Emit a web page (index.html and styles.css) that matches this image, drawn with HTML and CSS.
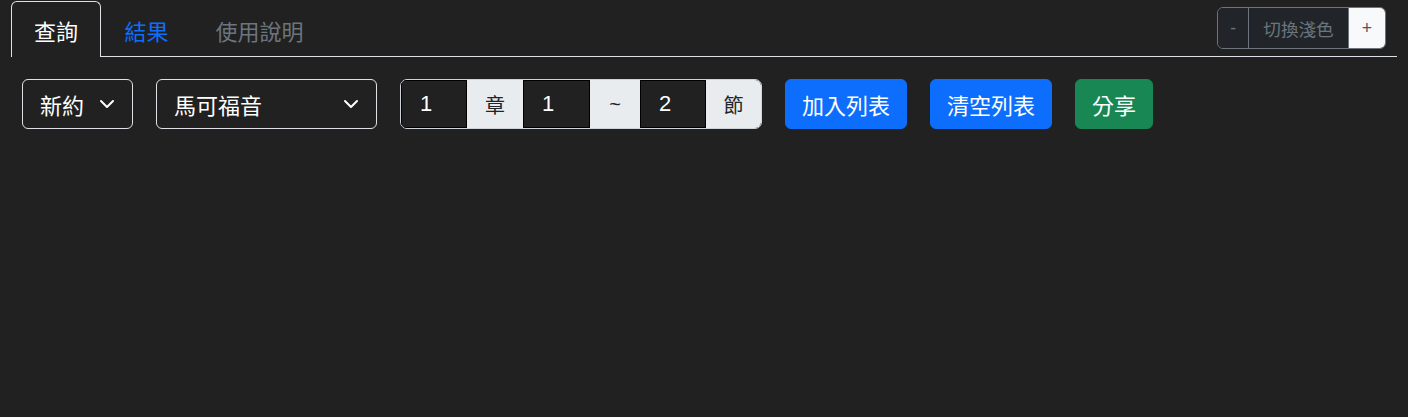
FILE: index.html
```html
<!DOCTYPE html>
<html lang="zh-Hant">
<head>
<meta charset="utf-8">
<title>查詢</title>
<link rel="stylesheet" href="styles.css">
</head>
<body>
<div class="page">
  <nav class="tabs">
    <a class="tab active">查詢</a>
    <a class="tab link">結果</a>
    <a class="tab muted">使用說明</a>
    <div class="theme-group">
      <span class="tbtn dark">-</span>
      <span class="tbtn dark label">切換淺色</span>
      <span class="tbtn light">+</span>
    </div>
  </nav>
  <div class="form-row">
    <div class="select w-testament">
      <span>新約</span>
      <svg class="chev" viewBox="0 0 16 16" width="16" height="16"><path d="m2 5 6 6 6-6" fill="none" stroke="#fff" stroke-width="2" stroke-linecap="round" stroke-linejoin="round"/></svg>
    </div>
    <div class="select w-book">
      <span>馬可福音</span>
      <svg class="chev" viewBox="0 0 16 16" width="16" height="16"><path d="m2 5 6 6 6-6" fill="none" stroke="#fff" stroke-width="2" stroke-linecap="round" stroke-linejoin="round"/></svg>
    </div>
    <div class="input-group">
      <span class="ig-input w66">1</span>
      <span class="ig-text w56">章</span>
      <span class="ig-input w67">1</span>
      <span class="ig-text w50">~</span>
      <span class="ig-input w66">2</span>
      <span class="ig-text w55">節</span>
    </div>
    <button class="btn primary">加入列表</button>
    <button class="btn primary">清空列表</button>
    <button class="btn success">分享</button>
  </div>
</div>
</body>
</html>
```
FILE: styles.css
```css
html, body {
  margin: 0;
  padding: 0;
  background: #212121;
  height: 100%;
}
body {
  font-family: "Liberation Sans", "Noto Sans CJK TC", sans-serif;
  color: #fff;
}
.page {
  padding: 1px 11px 0 11px;
}
.tabs {
  display: flex;
  align-items: flex-start;
  border-bottom: 1px solid #dee2e6;
  height: 55px;
}
.tab {
  display: flex;
  align-items: center;
  padding: 0 22.5px;
  font-size: 22px;
  border: 1px solid transparent;
  border-bottom: none;
  border-radius: 6px 6px 0 0;
  box-sizing: border-box;
  height: 56px;
  margin-bottom: -1px;
  cursor: pointer;
}
.tab.active {
  border-color: #dee2e6;
  background: #212121;
  color: #fff;
  padding: 0 22px;
}
.tab.link { color: #0d6efd; }
.tab.muted { color: #6c757d; }
.theme-group {
  margin-left: auto;
  margin-right: 11px;
  margin-top: 6px;
  display: flex;
  height: 42px;
  border: 1px solid #6c757d;
  border-radius: 6px;
  overflow: hidden;
  box-sizing: border-box;
}
.tbtn {
  display: flex;
  align-items: center;
  justify-content: center;
  font-size: 17.6px;
  padding: 0 12px;
  color: #6c757d;
}
.tbtn.dark { background: #212529; }
.tbtn.dark + .tbtn { border-left: 1px solid #6c757d; }
.tbtn.label { width: 100px; padding: 0; box-sizing: border-box; }
.tbtn.light { background: #f8f9fa; color: #555; width: 36px; padding: 0; }
.form-row {
  display: flex;
  gap: 23px;
  padding: 22px 11px 0 11px;
}
.select {
  display: flex;
  align-items: center;
  justify-content: space-between;
  height: 50px;
  box-sizing: border-box;
  border: 1px solid #dee2e6;
  border-radius: 6px;
  padding: 0 17px 0 17px;
  font-size: 22px;
  color: #fff;
}
.select .chev { width: 16px; height: 16px; }
.w-testament { width: 111px; }
.w-book { width: 221px; }
.input-group {
  display: flex;
  height: 50px;
  box-sizing: border-box;
  border: 1px solid #ced4da;
  border-radius: 7px;
  overflow: hidden;
}
.ig-input {
  display: flex;
  align-items: center;
  box-sizing: border-box;
  padding-left: 18px;
  background: #212121;
  border: 1px solid #000;
  font-size: 22px;
  color: #fff;
}
.ig-text {
  display: flex;
  align-items: center;
  justify-content: center;
  background: #e9ecef;
  color: #212529;
  font-size: 20px;
}
.w66 { width: 66px; }
.w67 { width: 67px; }
.w56 { width: 56px; }
.w55 { width: 55px; }
.w50 { width: 50px; }
.btn {
  height: 50px;
  padding: 0 16px;
  border: 1px solid transparent;
  border-radius: 6px;
  font-family: inherit;
  font-size: 22px;
  color: #fff;
  cursor: pointer;
}
.btn.primary { background: #0d6efd; border-color: #0d6efd; }
.btn.success { background: #198754; border-color: #198754; }
```
